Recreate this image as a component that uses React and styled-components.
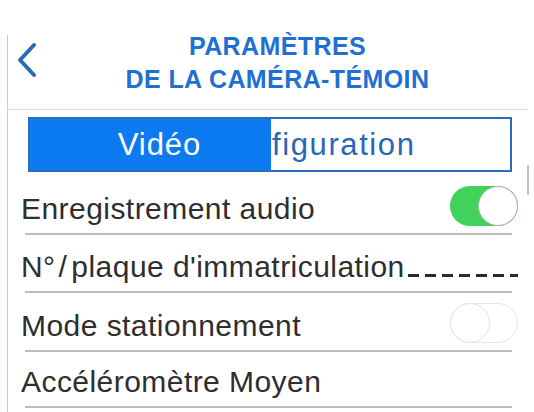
import React, { useState } from "react";
import styled, { createGlobalStyle } from "styled-components";

const GlobalStyle = createGlobalStyle`
  html, body {
    margin: 0;
    padding: 0;
    background: #ffffff;
  }
  body {
    font-family: "Liberation Sans", Arial, sans-serif;
  }
`;

const Screen = styled.div`
  position: relative;
  width: 534px;
  height: 412px;
  overflow: hidden;
  background: #fff;
`;

const Panel = styled.div`
  margin-left: 7px;
  width: 521px;
`;

const Header = styled.header`
  position: relative;
  box-sizing: border-box;
  height: 110px;
  padding-top: 30px;
  display: flex;
  align-items: flex-start;
  border-bottom: 1px solid #dcdcdc;

  &::before {
    content: "";
    position: absolute;
    left: 0;
    top: 35px;
    bottom: 0;
    width: 1px;
    background: #c9c9c9;
  }
`;

const BackButton = styled.button`
  flex: none;
  width: 40px;
  height: 40px;
  margin-top: 12px;
  padding: 0 0 0 9px;
  border: 0;
  background: none;
  display: flex;
  align-items: flex-start;
  cursor: pointer;
`;

const Title = styled.h1`
  flex: 1;
  margin: 0;
  padding-right: 20px;
  text-align: center;
  font-family: "Liberation Sans", Arial, sans-serif;
  font-weight: 700;
  font-size: 25px;
  line-height: 33px;
  color: #1f70d2;
  letter-spacing: 0.4px;
`;

const Body = styled.div`
  border-left: 1px solid #c9c9c9;
  padding-top: 7px;
  height: 302px;
`;

const Tabs = styled.div`
  display: flex;
  height: 55px;
  margin: 0 16px 5px 20px;
  box-sizing: border-box;
  border: 2px solid #2b6db9;
`;

const Tab = styled.div`
  flex: ${(p) => (p.active ? "0 0 241px" : "1")};
  display: flex;
  align-items: center;
  justify-content: ${(p) => (p.active ? "center" : "flex-start")};
  padding: ${(p) => (p.active ? "0 0 0 18px" : "0 0 0 1px")};
  box-sizing: border-box;
  background: ${(p) => (p.active ? "#0c7bf2" : "#ffffff")};
  color: ${(p) => (p.active ? "#ffffff" : "#2767b5")};
  font-size: 31px;
  line-height: 34px;
  letter-spacing: ${(p) => (p.active ? "1px" : "1.6px")};
  overflow: hidden;
  white-space: nowrap;
`;

const Row = styled.div`
  display: flex;
  align-items: flex-end;
  box-sizing: border-box;
  height: ${(p) => p.h || 56}px;
  padding: 0 10px 7px 13px;
`;

const Label = styled.span`
  font-size: 30px;
  line-height: 34px;
  color: #2e2e2e;
  letter-spacing: 0.45px;
  white-space: nowrap;
`;

const Slash = styled.span`
  margin: 0 4px 0 3px;
`;

const Spacer = styled.div`
  flex: 1;
`;

const Dashes = styled.div`
  flex: 1;
  height: 3px;
  margin: 0 0 7px 3px;
  background: repeating-linear-gradient(
    to right,
    #2a2a2a 0,
    #2a2a2a 11px,
    transparent 11px,
    transparent 17px
  );
`;

const Divider = styled.div`
  height: 2px;
  margin: 0 16px 0 17px;
  background: #bdbdbd;
`;

const Track = styled.button`
  position: relative;
  flex: none;
  width: 68px;
  height: 40px;
  padding: 0;
  border-radius: 20px;
  box-sizing: border-box;
  border: ${(p) => (p.on ? "none" : "1.5px solid #e6e6e6")};
  background: ${(p) => (p.on ? "#40d25b" : "#ffffff")};
  cursor: pointer;
`;

const Knob = styled.span`
  position: absolute;
  top: ${(p) => (p.on ? "0" : "-1.5px")};
  left: ${(p) => (p.on ? "28px" : "-1.5px")};
  width: 40px;
  height: 40px;
  box-sizing: border-box;
  border-radius: 50%;
  background: #fff;
  border: 1.5px solid ${(p) => (p.on ? "#a9b8a9" : "#e3e3e3")};
`;

const ScrollThumb = styled.div`
  position: absolute;
  right: 5px;
  top: 165px;
  width: 2px;
  height: 30px;
  background: #c4c4c4;
`;

const Toggle = ({ on, onChange }) => (
  <Track on={on ? 1 : 0} onClick={onChange}>
    <Knob on={on ? 1 : 0} />
  </Track>
);

const BackIcon = () => (
  <svg width="22" height="36" viewBox="0 0 22 36" fill="none">
    <path
      d="M18 3 L4 18 L18 33"
      stroke="#2b6cb5"
      strokeWidth="4"
      strokeLinecap="round"
      strokeLinejoin="round"
    />
  </svg>
);

export default function App() {
  const [audio, setAudio] = useState(true);
  const [parking, setParking] = useState(false);

  return (
    <Screen>
      <GlobalStyle />
      <Panel>
        <Header>
          <BackButton aria-label="Retour">
            <BackIcon />
          </BackButton>
          <Title>
            PARAMÈTRES
            <br />
            DE LA CAMÉRA-TÉMOIN
          </Title>
        </Header>
        <Body>
          <Tabs>
            <Tab active>Vidéo</Tab>
            <Tab>figuration</Tab>
          </Tabs>

          <Row h={56}>
            <Label>Enregistrement audio</Label>
            <Spacer />
            <Toggle on={audio} onChange={() => setAudio(!audio)} />
          </Row>
          <Divider />

          <Row h={56}>
            <Label>
              N°<Slash>/</Slash>plaque d'immatriculation
            </Label>
            <Dashes />
          </Row>
          <Divider />

          <Row h={57}>
            <Label>Mode stationnement</Label>
            <Spacer />
            <Toggle on={parking} onChange={() => setParking(!parking)} />
          </Row>
          <Divider />

          <Row h={54}>
            <Label>Accéléromètre Moyen</Label>
          </Row>
          <Divider />
        </Body>
      </Panel>
      <ScrollThumb />
    </Screen>
  );
}
